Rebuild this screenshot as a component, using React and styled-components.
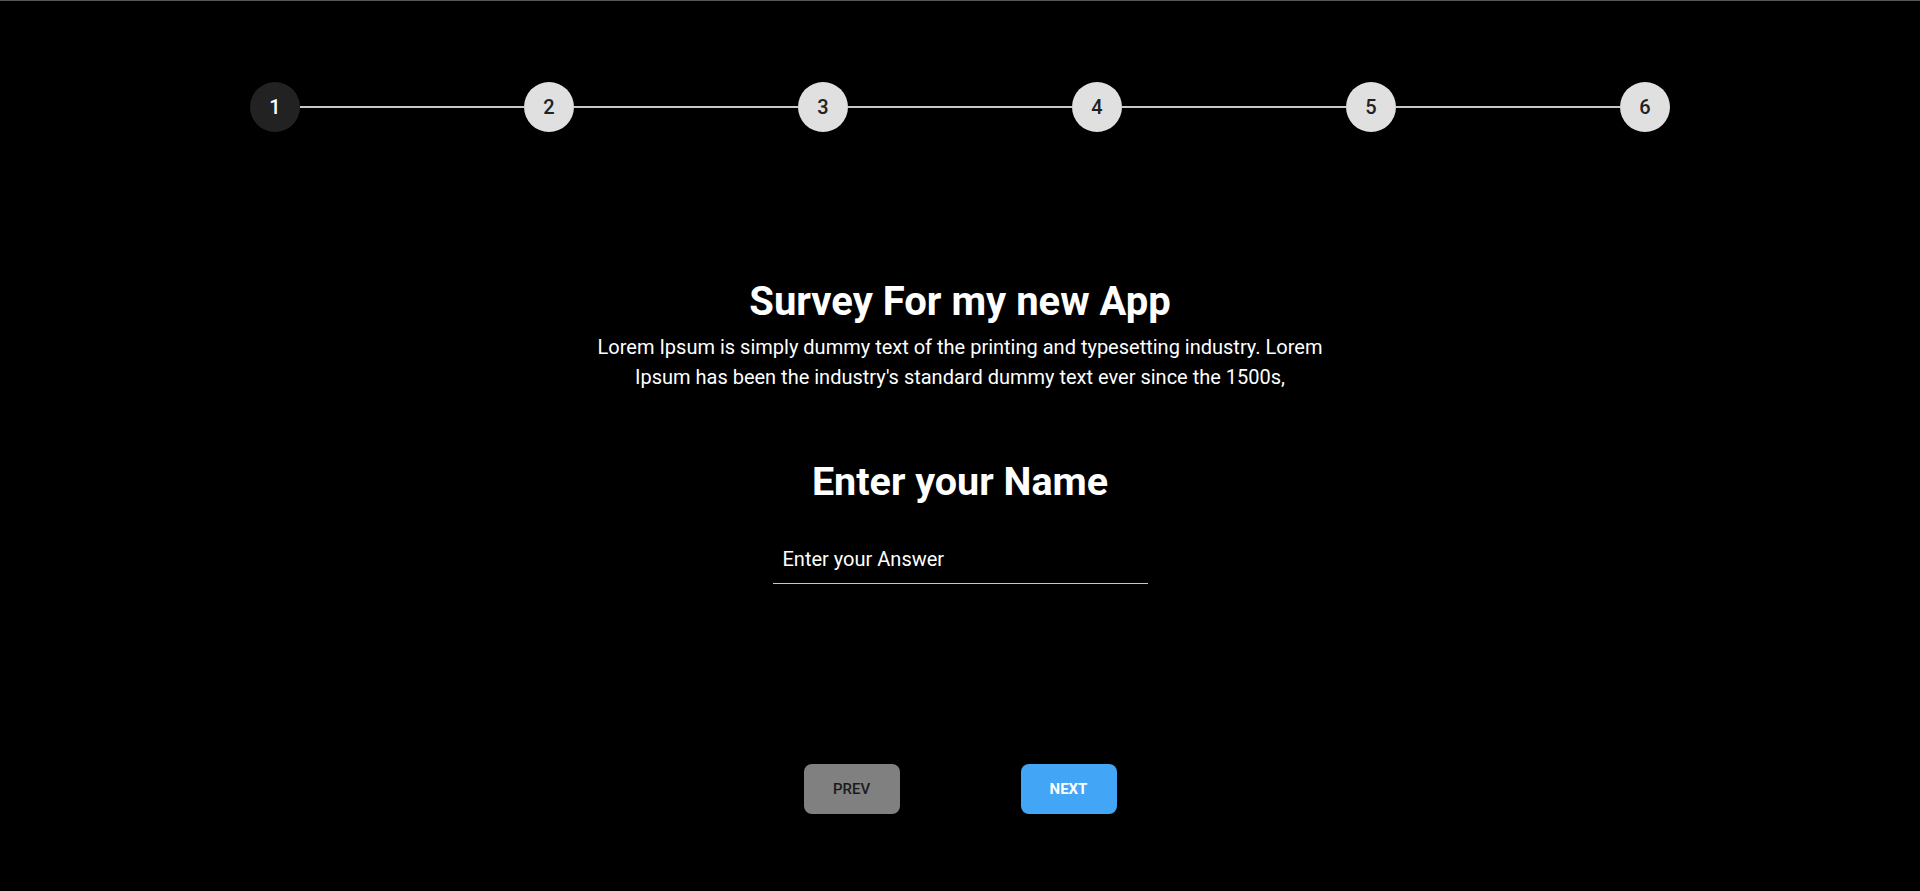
import styled, { createGlobalStyle } from 'styled-components';
import { useState, Fragment } from 'react';

const GlobalStyle = createGlobalStyle`
    * {
        box-sizing : border-box ;
    }
    body {
        margin : 0 ;
        background-color : #000 ;
        font-family : Roboto, "Liberation Sans", sans-serif ;
        color : #fff ;
    }
`;

const Page = styled.div`
    min-height : 100vh ;
    border-top : 1px solid #555 ;
    padding-top : 81px ;
    display : flex ;
    flex-direction : column ;
    align-items : center ;
`;

const Stepper = styled.div`
    width : 1420px ;
    display : flex ;
    align-items : center ;
`;

const Step = styled.div`
    width : 50px ;
    height : 50px ;
    border-radius : 50% ;
    flex-shrink : 0 ;
    display : flex ;
    align-items : center ;
    justify-content : center ;
    font-size : 20px ;
    font-weight : 500 ;
    background-color : ${props => props.active ? '#222' : '#e0e0e0'} ;
    color : ${props => props.active ? '#fff' : '#222'} ;
`;

const Connector = styled.div`
    flex : 1 ;
    height : 2px ;
    background-color : #c8c8c8 ;
`;

const Intro = styled.div`
    margin-top : 146px ;
    width : 768px ;
    text-align : center ;
`;

const Title = styled.h1`
    margin : 0 ;
    font-size : 40px ;
    line-height : 48px ;
    font-weight : 700 ;
`;

const Desc = styled.p`
    margin : 6px 0 0 ;
    font-size : 20px ;
    line-height : 30px ;
`;

const Question = styled.h2`
    margin : 67px 0 0 ;
    font-size : 39.5px ;
    line-height : 46px ;
    font-weight : 700 ;
`;

const AnswerInput = styled.input`
    margin-top : 36px ;
    width : 375px ;
    padding : 6px 10px 11.6px ;
    font-family : inherit ;
    font-size : 20px ;
    color : #fff ;
    background : transparent ;
    border : none ;
    border-bottom : 1px solid #c8c8c8 ;
    outline : none ;
    &::placeholder {
        color : #fff ;
    }
`;

const ButtonWrapper = styled.div`
    margin-top : 180px ;
    display : flex ;
    gap : 121px ;
`;

const Button = styled.button`
    width : 96px ;
    height : 50px ;
    border : none ;
    border-radius : 8px ;
    font-family : inherit ;
    font-size : 15px ;
    font-weight : ${props => props.primary ? 700 : 500} ;
    background-color : ${props => props.primary ? '#42a5f5' : '#808080'} ;
    color : ${props => props.primary ? '#fff' : '#1a1a1a'} ;
    cursor : pointer ;
`;

const steps = [1, 2, 3, 4, 5, 6];

export default function App() {
    const [current, setCurrent] = useState(1);
    const [answer, setAnswer] = useState('');

    return (
        <>
            <GlobalStyle />
            <Page>
                <Stepper>
                    {steps.map((n, i) => (
                        <Fragment key={n}>
                            {i > 0 && <Connector />}
                            <Step active={n === current}>{n}</Step>
                        </Fragment>
                    ))}
                </Stepper>

                <Intro>
                    <Title>Survey For my new App</Title>
                    <Desc>
                        Lorem Ipsum is simply dummy text of the printing and typesetting industry. Lorem Ipsum has been the industry's standard dummy text ever since the 1500s,
                    </Desc>
                </Intro>

                <Question>Enter your Name</Question>
                <AnswerInput
                    placeholder="Enter your Answer"
                    value={answer}
                    onChange={e => setAnswer(e.target.value)}
                />

                <ButtonWrapper>
                    <Button onClick={() => setCurrent(c => Math.max(1, c - 1))}>PREV</Button>
                    <Button primary onClick={() => setCurrent(c => Math.min(6, c + 1))}>NEXT</Button>
                </ButtonWrapper>
            </Page>
        </>
    );
}
